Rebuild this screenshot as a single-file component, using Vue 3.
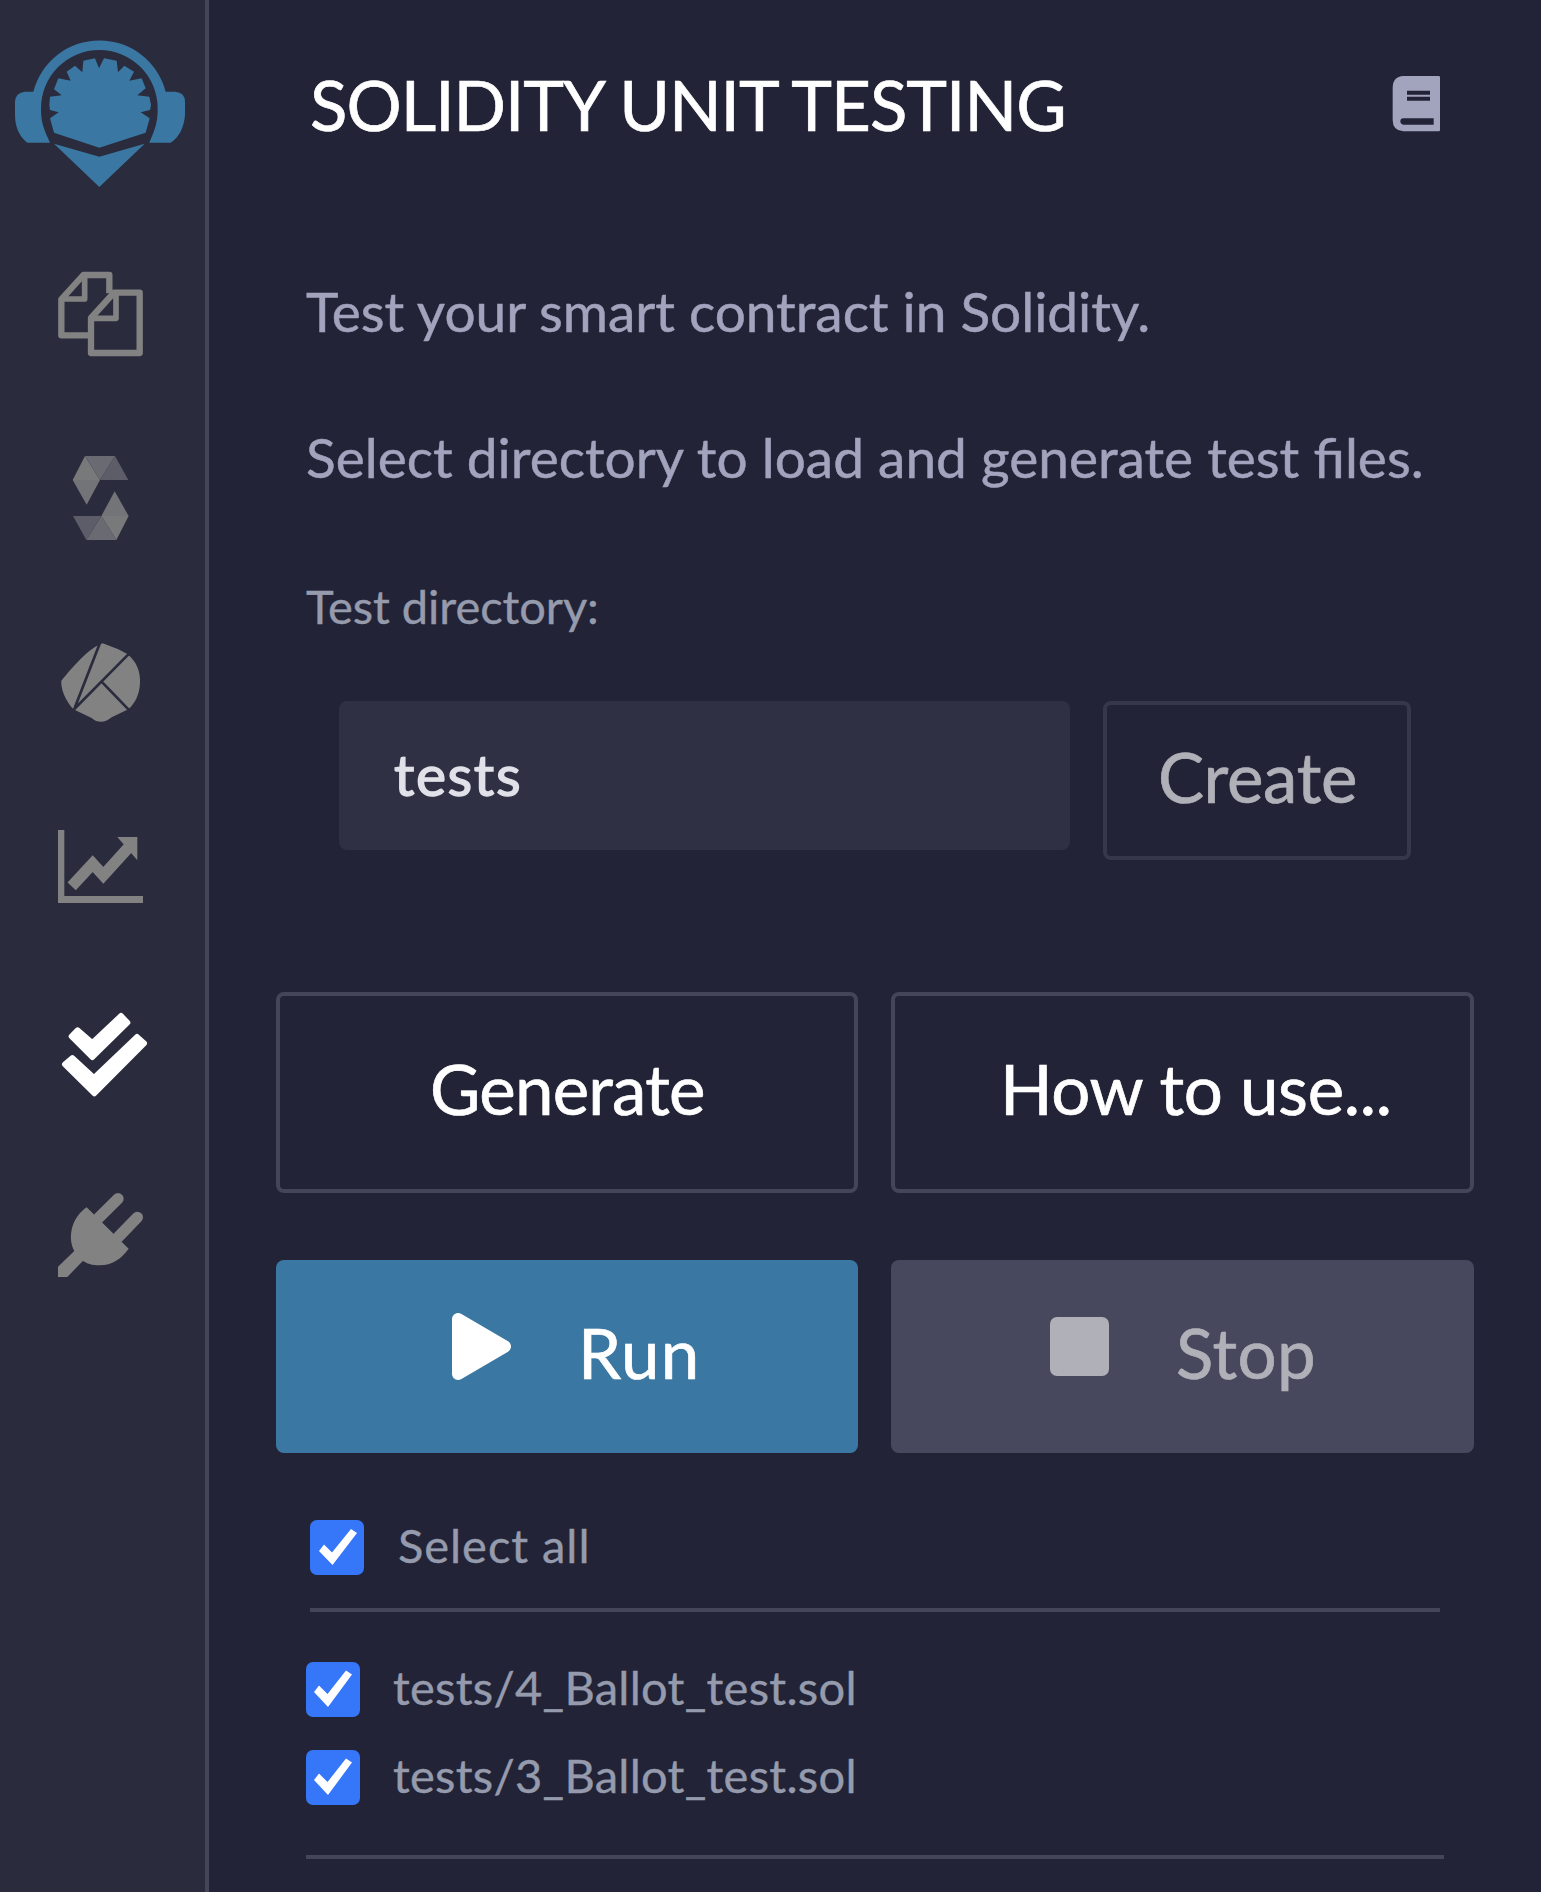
<script setup>
import { reactive, computed } from 'vue'

const files = reactive([
  { name: 'tests/4_Ballot_test.sol', checked: true },
  { name: 'tests/3_Ballot_test.sol', checked: true },
])
const allChecked = computed(() => files.every((f) => f.checked))
function toggleAll() {
  const next = !allChecked.value
  files.forEach((f) => (f.checked = next))
}
</script>

<template>
  <div class="app">
    <nav class="rail">
      <svg class="logo" viewBox="0 0 615 570" fill="#3a78a3">
        <path d="M100 215A205 205 0 0 1 497 215H525Q555 217 555 245V285C552 320 540 350 512 368H448C462 335 474 310 473 265A175 175 0 0 0 123 265C122 310 135 335 150 368H82C58 350 45 320 45 285V245Q47 217 75 215Z" />
        <path d="M298 383L162 338L150 295L176 277L150 270L148 255L150 230L185 226L162 208L175 175L212 182L200 155L225 137L247 157L250 122L285 115L297 145L312 115L350 122L354 157L373 137L402 155L388 182L425 175L437 205L412 226L448 230L453 255L450 270L422 277L449 295L437 338Z" />
        <path d="M162 371L298 410L434 371L298 501Z" />
      </svg>

      <svg class="icon files" viewBox="0 0 360 540" fill="none" stroke="#828282" stroke-width="19" stroke-linejoin="round">
        <path d="M148 256H64V148L130 75H208V130" />
        <path d="M68 147H134V78" stroke-width="17" />
        <path d="M153 204L222 128H299V309H153Z" />
        <path d="M158 205H228V131" stroke-width="17" />
      </svg>

      <svg class="icon solidity" viewBox="0 540 360 390">
        <g id="half">
          <path fill="#78797a" d="M135 618L180 690H98Z" />
          <path fill="#737477" d="M98 690H180L140 764Z" />
          <path fill="#6a6b72" d="M135 618H225L180 690Z" />
          <path fill="#5c5d68" d="M225 618L265 690H180Z" />
        </g>
        <use href="#half" transform="rotate(180 182 744)" />
      </svg>

      <svg class="icon deploy" viewBox="0 0 360 570">
        <path fill="#828282" d="M188 70L235 88L262 102C290 125 302 155 300 190C298 225 285 250 265 268L215 292Q183 318 155 294L100 268C75 240 62 205 64 182C100 140 145 85 188 70Z" />
        <path fill="none" stroke="#2a2b3d" stroke-width="8" d="M181 66L104 264M268 100L100 270M184 184L268 271" />
      </svg>

      <svg class="icon chart" viewBox="0 570 360 330">
        <path fill="#828282" d="M54 630H73V828H309V849H54ZM232 651H292V721Z" />
        <path fill="none" stroke="#828282" stroke-width="34" d="M95 799L158 731L190 766L268 680" />
      </svg>

      <svg class="icon checks" viewBox="0 0 360 540" fill="#fff" stroke="#fff" stroke-width="16" stroke-linejoin="round">
        <path d="M94 139L113 120L157 158L243 77L263 98L157 202Z" />
        <path d="M74 223L97 203L162 263L291 140L313 160L163 311Z" />
      </svg>

      <svg class="icon plug" viewBox="0 540 360 360" fill="#828282">
        <path d="M54 830L106 780L132 809L82 861H54Z" />
        <path d="M140 652L266 776C245 806 215 826 180 826C155 826 140 820 128 812L104 785C92 765 90 740 96 715C102 690 120 665 140 652Z" />
        <path fill="none" stroke="#828282" stroke-width="34" stroke-linecap="round" d="M175 685L234 626M235 741L292 682" />
      </svg>
    </nav>

    <main class="panel">
      <header class="head">
        <h1 class="title">SOLIDITY UNIT TESTING</h1>
        <svg class="book" viewBox="90 70 159 180">
          <path fill="#a2a3bd" fill-rule="evenodd" d="M130 76H236Q240 76 240 80V239Q240 242 236 242H130Q98 240 98 208V112Q98 78 130 76ZM141 120V132H210V120ZM141 138V150H210V138ZM130 203Q121 203 121 212T130 222H221V203Z" />
        </svg>
      </header>

      <p class="text intro">Test your smart contract in Solidity.</p>
      <p class="text hint">Select directory to load and generate test files.</p>
      <label class="label">Test directory:</label>

      <div class="directory">
        <div class="input">tests</div>
        <button class="btn create">Create</button>
      </div>

      <div class="pair">
        <button class="btn outline generate">Generate</button>
        <button class="btn outline howto">How to use...</button>
      </div>
      <div class="pair actions">
        <button class="btn run">
          <svg class="play" viewBox="0 0 60 68"><path d="M6 6V61L53 33.500Z" fill="#fff" stroke="#fff" stroke-width="12" stroke-linejoin="round" /></svg>
          <span>Run</span>
        </button>
        <button class="btn stop"><i class="square"></i><span>Stop</span></button>
      </div>

      <div class="check-row all" @click="toggleAll">
        <span class="box" :class="{ on: allChecked }">
          <svg v-if="allChecked" viewBox="0 0 54 55"><path d="M9 31L14 24.500L22 32.500L41 9L47 13L22.500 45Z" fill="#fff" /></svg>
        </span>
        <span class="name">Select all</span>
      </div>
      <hr class="rule first" />
      <div v-for="f in files" :key="f.name" class="check-row file" @click="f.checked = !f.checked">
        <span class="box" :class="{ on: f.checked }">
          <svg v-if="f.checked" viewBox="0 0 54 55"><path d="M8 30L13 23.500L21.500 32L40 8.500L46 12.500L22 45Z" fill="#fff" /></svg>
        </span>
        <span class="name">{{ f.name }}</span>
      </div>
      <hr class="rule last" />
    </main>
  </div>
</template>

<style>
body {
  margin: 0;
  background: #fff;
}
</style>

<style scoped>
.app {
  display: flex;
  box-sizing: border-box;
  width: 1541px;
  height: 1892px;
  background: #222336;
  font-family: Lato, "Noto Sans", sans-serif;
  line-height: 1;
  overflow: hidden;
}
.rail {
  display: flex;
  flex-direction: column;
  box-sizing: border-box;
  width: 209px;
  flex: none;
  padding-top: 20px;
  background: #2a2b3d;
  border-right: 4px solid #444559;
}
.logo {
  width: 205px;
  height: 190px;
  flex: none;
}
.icon {
  display: block;
  width: 120px;
  flex: none;
  margin-left: 40px;
}
.files { height: 180px; margin-top: 40px; }
.solidity { height: 130px; }
.deploy { height: 190px; margin-top: 60px; }
.chart { height: 110px; }
.checks { height: 180px; margin-top: 70px; }
.plug { height: 120px; }

.panel {
  flex: 1;
  min-width: 0;
  padding: 70px 67px 0;
  white-space: nowrap;
}
.head {
  display: flex;
  justify-content: space-between;
  align-items: flex-start;
  height: 69px;
  padding: 0 31px 0 34px;
}
.title {
  margin: 0;
  font-size: 69px;
  font-weight: 400;
  letter-spacing: -0.98px;
  color: #fff;
  -webkit-text-stroke: 0.7px #fff;
}
.book {
  width: 53px;
  height: 60px;
  margin-top: 4px;
}
.text {
  margin: 0;
  height: 55px;
  font-size: 55px;
  color: #a2a3bd;
  -webkit-text-stroke: 0.5px #a2a3bd;
}
.intro { margin: 145px 0 0 30px; letter-spacing: -0.04px; }
.hint { margin: 91px 0 0 30px; }
.label {
  display: block;
  margin: 98px 0 0 30px;
  height: 47px;
  font-size: 47px;
  letter-spacing: -0.05px;
  color: #959bad;
  -webkit-text-stroke: 0.4px #959bad;
}
.directory {
  display: flex;
  align-items: flex-start;
  gap: 33px;
  margin: 71px 0 0 63px;
}
.input {
  display: flex;
  align-items: center;
  box-sizing: border-box;
  width: 731px;
  height: 149px;
  padding: 0 0 2px 55px;
  border-radius: 8px;
  background: #2f3043;
  color: #e0e1e9;
  font-size: 57px;
  letter-spacing: 1.6px;
  -webkit-text-stroke: 1.4px #e0e1e9;
}
.btn {
  display: flex;
  align-items: center;
  box-sizing: border-box;
  margin: 0;
  padding: 0 0 8px;
  border: 0;
  border-radius: 8px;
  background: none;
  font: 400 69px/1 Lato, "Noto Sans", sans-serif;
  color: #fff;
  -webkit-text-stroke: 0.7px currentColor;
}
.create {
  width: 308px;
  height: 159px;
  padding-left: 51px;
  border: 4px solid #36374a;
  color: #b0b1b8;
  letter-spacing: -0.3px;
}
.pair {
  display: flex;
  gap: 33px;
  margin-top: 132px;
}
.pair .btn {
  width: 582px;
  flex: none;
}
.pair .btn + .btn {
  width: 583px;
}
.outline {
  height: 201px;
  border: 4px solid #444559;
}
.pair .generate { padding-left: 150px; letter-spacing: -0.76px; }
.pair .howto { padding-left: 105px; letter-spacing: -0.3px; }
.actions { margin-top: 67px; }
.run,
.stop {
  height: 193px;
}
.run { padding-left: 176px; background: #3a78a3; letter-spacing: 1.2px; }
.stop { padding-left: 159px; background: #47485d; color: #b0b1b8; letter-spacing: 0.5px; }
.play {
  width: 60px;
  height: 68px;
  margin: 0 66px 12px 0;
}
.square {
  width: 59px;
  height: 59px;
  margin: 0 67px 12px 0;
  border-radius: 7px;
  background: #b0b1b8;
}
.check-row {
  display: flex;
  align-items: flex-start;
  height: 55px;
  font-size: 47px;
  color: #959bad;
}
.name {
  padding-top: 2px;
  -webkit-text-stroke: 0.4px #959bad;
}
.box {
  box-sizing: border-box;
  width: 54px;
  height: 55px;
  border: 3px solid #959bad;
  border-radius: 7px;
}
.box.on {
  border: 0;
  background: #3676f8;
}
.box svg {
  display: block;
  width: 54px;
  height: 55px;
}
.all { margin: 67px 0 0 34px; letter-spacing: 0.95px; }
.all .name { margin-left: 34px; }
.file { margin: 33px 0 0 30px; letter-spacing: 0.28px; }
.file .name { margin-left: 33px; }
.rule {
  height: 4px;
  border: 0;
  background: #444559;
}
.first { width: 1130px; margin: 33px 0 50px 34px; }
.first + .file { margin-top: 0; }
.last { width: 1138px; margin: 50px 0 0 30px; }
</style>
